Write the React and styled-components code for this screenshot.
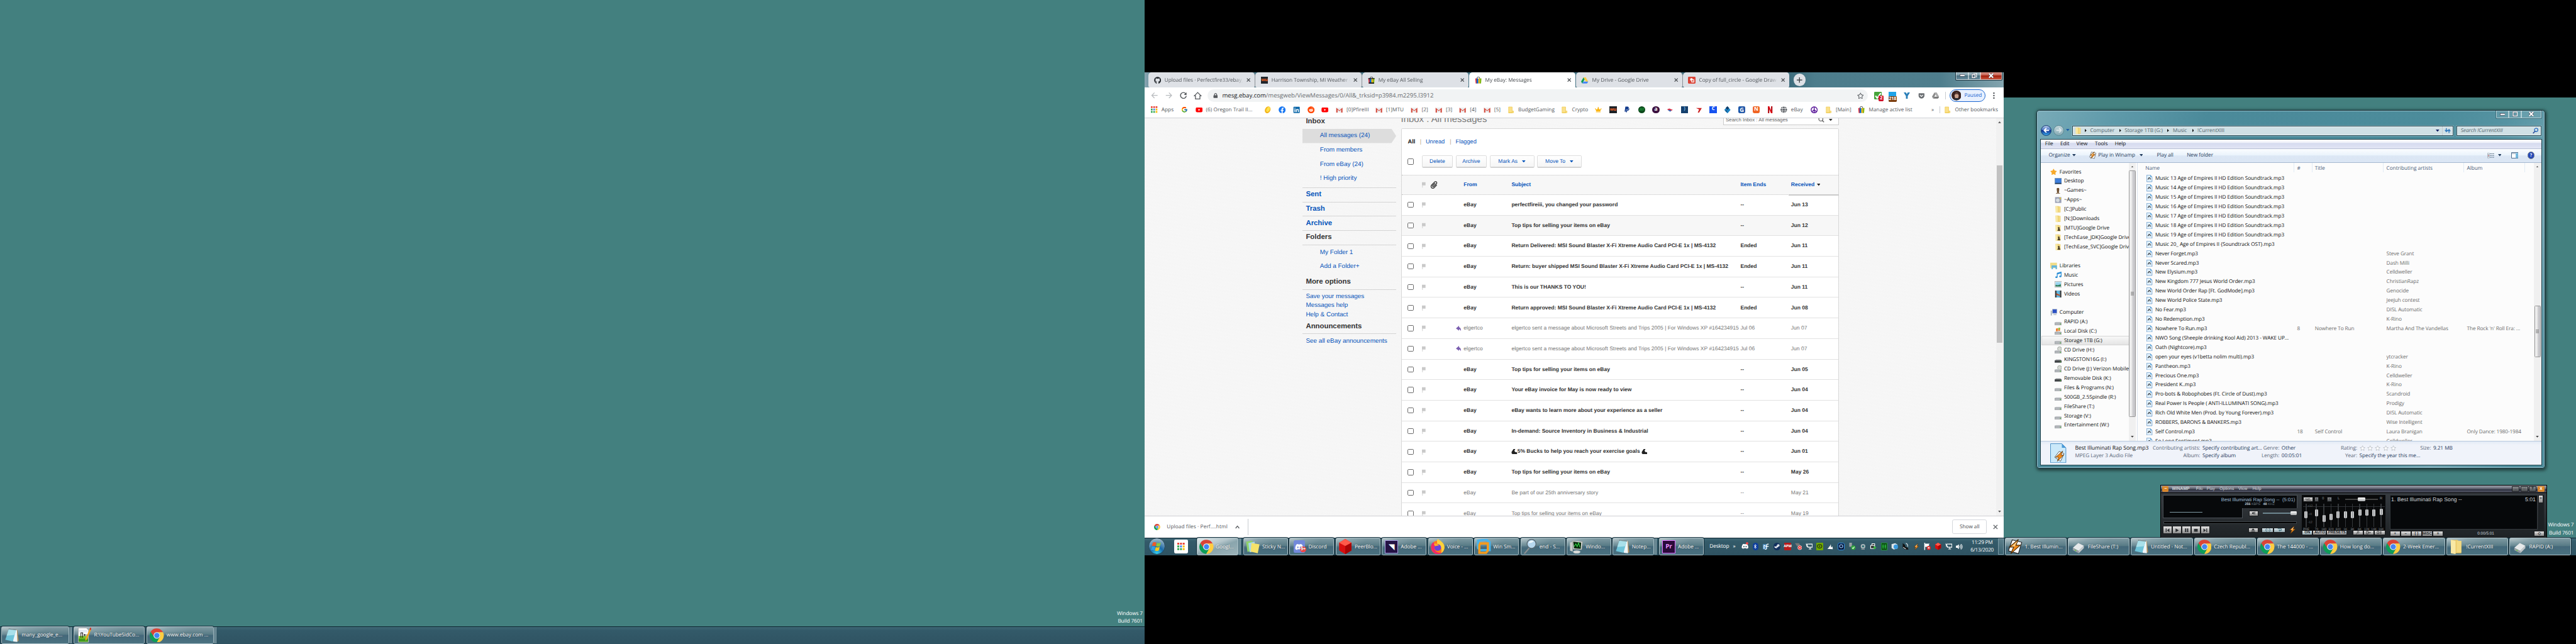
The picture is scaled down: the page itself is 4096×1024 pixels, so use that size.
import React from "react";
import styled, { createGlobalStyle, css } from "styled-components";
import {
  FaGithub, FaFacebook, FaLinkedin, FaReddit, FaYoutube, FaPaypal, FaBluetoothB,
  FaSteamSymbol, FaDiscord, FaPeace, FaCrown, FaStar, FaRegStar, FaLock, FaGetPocket,
  FaPaperclip, FaVolumeUp, FaChessPawn, FaMusic, FaGlobe,
} from "react-icons/fa";
import { FcGoogle } from "react-icons/fc";

const UI = `"Open Sans", "Noto Sans", sans-serif`;
const ARIAL = `"Liberation Sans", Arial, sans-serif`;

const Global = createGlobalStyle`
  html, body { margin: 0; background: #000; overflow: hidden; }
  * { box-sizing: border-box; }
  svg { display: block; flex: none; }
`;

/* ---------- Desktop ---------- */
const Board = styled.div`
  zoom: 0.711111;
  width: 5760px;
  height: 1440px;
  display: flex;
  align-items: flex-start;
  background: #000;
  overflow: hidden;
  font-family: ${UI};
  font-size: 11.6px;
  letter-spacing: -0.05px;
  line-height: 16px;
  white-space: nowrap;
  text-rendering: geometricPrecision;
`;
const Screen = styled.div`
  width: ${(p) => p.$w}px;
  height: ${(p) => p.$h}px;
  margin-top: ${(p) => p.$top}px;
  flex: none;
  display: flex;
  flex-direction: column;
  overflow: hidden;
  background: #43807f;
`;
const Desktop = styled.div`
  flex: 1;
  min-height: 0;
  position: relative;
  display: flex;
  flex-direction: column;
  justify-content: flex-end;
  align-items: flex-end;
`;
const Build = styled.div`
  color: #fff;
  text-align: right;
  line-height: 17.5px;
  padding: 0 5px 1px 0;
  letter-spacing: -0.15px;
`;

/* ---------- Taskbar ---------- */
const Bar = styled.div`
  height: 40px;
  flex: none;
  display: flex;
  align-items: stretch;
  padding-left: ${(p) => p.$pad || 0}px;
  background: linear-gradient(#0d2430 0 1px, #8fabb3 1px 2px, #3d6674 2px, #335a69 9px, #2f5362 100%);
`;
const Stack = styled.div`
  width: ${(p) => p.$w}px;
  flex: none;
  display: flex;
`;
const TaskBtn = styled.div`
  width: ${(p) => p.$w}px;
  height: 39px;
  margin-top: 1px;
  flex: none;
  display: flex;
  align-items: center;
  border: 1px solid #aec3ca;
  outline: 1px solid #14303c;
  outline-offset: 0;
  border-radius: 3px;
  color: #fff;
  overflow: hidden;
  background: ${(p) =>
    p.$active
      ? "linear-gradient(160deg, #dfe8ea 0%, #b5c6cb 38%, #8aa5ad 55%, #9db3b9 100%)"
      : "radial-gradient(ellipse 70% 60% at 0% 0%, #b6c5c9 0%, rgba(150,175,182,.55) 50%, rgba(120,150,160,0) 100%), linear-gradient(#7f9aa2 0%, #587b86 45%, #44687a 50%, #4b7280 100%)"};
  text-shadow: 0 0 2px rgba(0, 0, 0, 0.5);
`;
const Edge = styled.div`
  width: 3px;
  height: 37px;
  margin-top: 2px;
  border-right: 1px solid #9bb3bb;
  background: #3a5f6d;
`;
const TaskIcon = styled.span`
  width: ${(p) => p.$w}px;
  height: 34px;
  flex: none;
  display: flex;
  align-items: center;
  justify-content: center;
`;

function Task({ icon, text, slot, w, iw = 41, stack = 0, active }) {
  return (
    <Stack $w={slot}>
      <TaskBtn $w={w} $active={active}>
        <TaskIcon $w={iw}>{icon}</TaskIcon>
        {text}
      </TaskBtn>
      {Array.from({ length: stack }, (_, i) => <Edge key={i} />)}
    </Stack>
  );
}

/* ---------- Icons ---------- */
const Chrome = ({ s = 32 }) => (
  <svg width={s} height={s} viewBox="0 0 48 48">
    <path fill="#db4437" d="M3.2 12A24 24 0 0 1 44.8 13H24A11 11 0 0 0 14.5 29.5Z" />
    <path fill="#ffcd40" d="M44.8 13A24 24 0 0 1 23 48L33.5 29.5A11 11 0 0 0 24 13Z" />
    <path fill="#0f9d58" d="M3.2 12A24 24 0 0 0 23 48L33.5 29.5A11 11 0 0 1 14.5 29.5Z" />
    <circle cx="24" cy="24" r="11" fill="#f1f1f1" />
    <circle cx="24" cy="24" r="8.7" fill="#4285f4" />
  </svg>
);
const Notepad = () => (
  <svg width="34" height="34" viewBox="0 0 34 34">
    <path d="M11 4l18 1 3 25-4 1z" fill="#b08d5a" />
    <path d="M10 3l18 2 1 27-9-1z" fill="#eef5f8" />
    <path d="M10 3l16 2-7 26L2 27z" fill="#6fc3d8" />
    <path d="M10 3l16 2-3 11L5 18z" fill="#a9e0ea" />
    <path d="M10 3l17 2" stroke="#555" strokeWidth="2" strokeDasharray="1.5 1.5" />
  </svg>
);
const NotepadPP = () => (
  <svg width="32" height="36" viewBox="0 0 32 36">
    <path d="M2 2h18l5 5v27H2z" fill="#fff" stroke="#999" />
    <path d="M3 20h21v13H3z" fill="#7ac52c" />
    <path d="M3 26h21v7H3z" fill="#3f9a1c" />
    <path d="M3 8h19M3 11h20" stroke="#b8c8e0" />
    <path d="M8 24V13h4v11M14 18h5M16.500 15.500v5M20 18h4" stroke="#111" fill="none" strokeWidth="1.500" />
    <path d="M29 1l3 2-11 25-3 3V26z" fill="#f0a020" />
    <path d="M29 1l3 2-2 4-3-2z" fill="#c33" />
  </svg>
);
const Folder = ({ w = 16, h = 16, person }) => (
  <svg width={w} height={h} viewBox="0 0 16 16">
    <path d="M2 1h7l1 1h3v13H3z" fill="#e9c867" />
    <path d="M2 1l5 1v14l-5-1z" fill="#f9e9a5" />
    <path d="M8 2h5v12H8z" fill="#f3da83" />
    {person && <path d="M7 6h4v3l2 5H6l2-4z" fill="#4a4030" />}
  </svg>
);
const BmFolder = () => (
  <svg width="16" height="16" viewBox="0 0 16 16">
    <path d="M2.500 1.500h8v13h-8z" fill="#fbe08a" stroke="#edc94f" />
    <path d="M10.500 10.500h3v4h-11v0h8z" fill="#fbe08a" stroke="#edc94f" />
  </svg>
);
const Bag = ({ black }) => (
  <svg width="16" height="16" viewBox="0 0 16 16">
    <path d="M5 5V3a3 2.500 0 0 1 6 0v2" fill="none" stroke="#333" strokeWidth="1.200" />
    <path d="M1 4h4v11H2z" fill={black ? "#d5282e" : "#e53238"} />
    <path d="M4 4h4v11H4z" fill="#0064d2" />
    <path d="M8 4h3v11H8z" fill="#f5af02" />
    <path d="M11 4h4l-1 11h-3z" fill="#86b817" />
    {black && <path d="M1 3h14v2H1zM2 13h12v3H2z" fill="#111" />}
  </svg>
);
const Gmail = () => (
  <svg width="16" height="16" viewBox="0 0 16 16">
    <path d="M1 3h14v11H1z" fill="#eceff1" />
    <path d="M1 14V3l7 6 7-6v11h-3V7.500l-4 3.300-4-3.300V14z" fill="#d54b3d" />
  </svg>
);
const Drive = ({ gray }) => (
  <svg width="16" height="16" viewBox="0 0 16 16">
    <path d="M5.500 1.500L0 11l2.700 4 5.400-9.500z" fill={gray ? "#8a8a8a" : "#0f9d58"} />
    <path d="M5.500 1.500h5L16 11h-5.300z" fill={gray ? "#aaa" : "#ffcd40"} />
    <path d="M5.200 11H16l-2.700 4H2.700z" fill={gray ? "#777" : "#4285f4"} />
  </svg>
);
const Bolt = ({ s = 32, paper }) => (
  <svg width={s} height={s} viewBox="0 0 32 32">
    {paper && <path d="M10 2l20 5-7 24L2 25z" fill="#fff" stroke="#222" strokeWidth="1.500" />}
    <path d="M23 1L4 17h9L7 31l20-18h-9z" fill="#f08a1c" stroke="#4a2a05" strokeWidth="1.500" />
    <path d="M21 4L9 16h6z" fill="#ffd08a" />
  </svg>
);
const Gem = ({ s = 34 }) => (
  <svg width={s} height={s} viewBox="0 0 32 32">
    <path d="M16 0l13 8v16l-13 8L3 24V8z" fill="#d80f0f" />
    <path d="M16 0l13 8-13 7L3 8z" fill="#ff5a4a" />
    <path d="M16 15l13-7v16l-13 8z" fill="#a80505" />
  </svg>
);
const Sticky = () => (
  <svg width="34" height="34" viewBox="0 0 34 34">
    <path d="M2 6l14-2 3 22-14 3z" fill="#8fd36b" />
    <path d="M7 9l14-3 1 21-12 3z" fill="#a8d8e8" />
    <path d="M14 9l18 3-4 20-16-4z" fill="#f6e36a" />
  </svg>
);
const Firefox = () => (
  <svg width="34" height="34" viewBox="0 0 34 34">
    <circle cx="17" cy="19" r="15" fill="#ff7a1a" />
    <path d="M17 0c8 5 16 10 15 20-1 6-4 10-8 12 4-8 0-18-8-21 0 0-2-7 1-11z" fill="#ffd23a" />
    <path d="M3 12c-3 12 4 20 12 22 6 1 10-2 11-4-12 4-20-6-15-18l-4-5z" fill="#f0286a" />
    <circle cx="17" cy="19" r="7.500" fill="#6a44d8" />
    <path d="M8 11c4-2 9 0 12 4-4-1-6 1-9 1z" fill="#ffa82a" />
  </svg>
);
const VM = () => (
  <svg width="32" height="34" viewBox="0 0 32 34">
    <path d="M3 4l18-3 8 6v18H8L3 20z" fill="none" stroke="#49b3ea" strokeWidth="5" />
    <path d="M8 10h17v16l-4 5H6V14z" fill="none" stroke="#f39a1e" strokeWidth="5" />
  </svg>
);
const Lens = () => (
  <svg width="34" height="34" viewBox="0 0 34 34">
    <path d="M15 20L4 33" stroke="#8b8f92" strokeWidth="3" />
    <circle cx="20" cy="11" r="10" fill="#b7d8ee" stroke="#5a6b75" strokeWidth="2" />
    <path d="M13 9a8 8 0 0 1 12-4c-3 3-8 5-12 4z" fill="#eef8ff" />
  </svg>
);
const Monitor = () => (
  <svg width="34" height="34" viewBox="0 0 34 34">
    <path d="M2 8l6-2v22l-6-2z" fill="#c9cdc9" />
    <path d="M7 4l23 2-2 18-19-1z" fill="#dfe3df" stroke="#888" />
    <path d="M9 6l18 2-1 14-15-1z" fill="#06290c" />
    <path d="M11 17l4-6 3 6 3-8 3 9" fill="none" stroke="#37e04a" strokeWidth="1.500" />
    <ellipse cx="17" cy="29" rx="8" ry="3.500" fill="#d7dad7" />
  </svg>
);
const Drivebox = () => (
  <svg width="30" height="30" viewBox="0 0 34 34">
    <path d="M3 19L17 7l14 7-13 13z" fill="#e6e9ea" />
    <path d="M3 19l15 8v6L3 25z" fill="#9aa0a3" />
    <path d="M18 27l13-13v6L18 33z" fill="#c4c8ca" />
    <circle cx="10" cy="26" r="1.500" fill="#5fd13a" />
  </svg>
);
const Orb = () => (
  <svg width="38" height="38" viewBox="0 0 38 38">
    <defs>
      <radialGradient id="orb" cx=".5" cy=".95" r=".9">
        <stop offset="0" stopColor="#36d3f5" />
        <stop offset=".45" stopColor="#1b6aa8" />
        <stop offset="1" stopColor="#9db7c6" />
      </radialGradient>
    </defs>
    <circle cx="19" cy="19" r="18" fill="url(#orb)" stroke="#1d3b4c" />
    <path d="M10 11c3-2 5-1 8 0l-2 8c-3-1-5-2-8 0z" fill="#ef5a28" />
    <path d="M19 11.500c3 1 6 1 9-1l-2 8c-3 2-6 2-9 1z" fill="#8cc63f" />
    <path d="M7.500 20.500c3-2 5-1 8 0l-2 8c-3-1-5-2-8 0z" fill="#2f9fe8" />
    <path d="M16.500 21c3 1 6 1 9-1l-2 8c-3 2-6 2-9 1z" fill="#fbc81a" />
  </svg>
);
const AppGrid = ({ s = 14 }) => (
  <svg width={s} height={s} viewBox="0 0 14 14">
    {["#ea4335", "#ea4335", "#ea4335", "#34a853", "#4285f4", "#fbbc05", "#34a853", "#34a853", "#fbbc05"].map((c, i) => (
      <rect key={i} x={(i % 3) * 5} y={Math.floor(i / 3) * 5} width="3.500" height="3.500" fill={c} />
    ))}
  </svg>
);
const Tri = ({ w = 8, h = 5, c = "#222", up }) => (
  <svg width={w} height={h} viewBox="0 0 8 5"><path d={up ? "M0 5L4 0l4 5z" : "M0 0h8L4 5z"} fill={c} /></svg>
);
const RightTri = () => (
  <svg width="4" height="7" viewBox="0 0 4 7"><path d="M0 0l4 3.500L0 7z" fill="#111" /></svg>
);
const Tile = styled.span`
  width: ${(p) => p.$s || 16}px;
  height: ${(p) => p.$h || p.$s || 16}px;
  flex: none;
  display: flex;
  align-items: center;
  justify-content: center;
  background: ${(p) => p.$bg || "transparent"};
  color: ${(p) => p.$c || "#fff"};
  border: ${(p) => (p.$bd ? `2px solid ${p.$bd}` : "none")};
  border-radius: ${(p) => p.$r || 0}px;
  font: bold ${(p) => p.$f || 11}px/1 ${UI};
  letter-spacing: -0.3px;
`;
const Badged = styled.span`
  position: relative;
  display: flex;
`;
const Badge = styled.span`
  position: absolute;
  left: ${(p) => p.$x}px;
  top: ${(p) => p.$y}px;
  min-width: 11px;
  padding: 0 1px;
  text-align: center;
  background: ${(p) => p.$bg};
  color: #fff;
  border-radius: ${(p) => p.$r || 2}px;
  font: bold 10px/12px ${UI};
`;
const Dot = styled.span`
  position: absolute;
  left: 10px;
  top: -2px;
  width: 6px;
  height: 6px;
  border-radius: 3px;
  background: #f04747;
`;

/* ---------- Browser ---------- */
const Browser = styled.div`
  align-self: stretch;
  flex: 1;
  min-height: 0;
  display: flex;
  flex-direction: column;
  background: #fff;
`;
const TabStrip = styled.div`
  height: 34px;
  flex: none;
  display: flex;
  padding-left: 8px;
  background: linear-gradient(to right, #8aa6b2 0, #4d7b8b 30px, #3f6d7d 1440px, #4d7d8c 1500px, #4f7e8d 1780px, #83a4ae 1920px);
`;
const Tab = styled.div`
  width: 239px;
  flex: none;
  display: flex;
  align-items: center;
  padding: 0 9px 0 12px;
  gap: 8px;
  border-radius: 7px 7px ${(p) => (p.$on ? "0 0" : "3px 3px")};
  border-right: ${(p) => (p.$sep ? "1px solid #8b9095" : "1px solid transparent")};
  background: ${(p) => (p.$on ? "#fff" : "#dee1e6")};
  background-clip: padding-box;
  color: ${(p) => (p.$on ? "#45494d" : "#54585d")};
`;
const TabTitle = styled.span`
  flex: 1;
  min-width: 0;
  overflow: hidden;
  letter-spacing: 0;
  mask-image: linear-gradient(to right, #000 90%, transparent);
`;
const Cross = ({ s = 9, c = "#45494d" }) => (
  <svg width={s} height={s} viewBox="0 0 10 10"><path d="M1 1l8 8M9 1L1 9" stroke={c} strokeWidth="1.800" /></svg>
);
const NewTab = styled.div`
  width: 28px;
  height: 28px;
  margin: 3px 0 0 8px;
  border-radius: 14px;
  background: #dee1e6;
  display: flex;
  align-items: center;
  justify-content: center;
`;
const Controls = styled.div`
  margin-left: auto;
  margin-right: 3px;
  height: 18px;
  display: flex;
  border: 1px solid #1e3540;
  border-top: 0;
  border-radius: 0 0 4px 4px;
  overflow: hidden;
`;
const Control = styled.div`
  width: ${(p) => p.$w}px;
  display: flex;
  align-items: center;
  justify-content: center;
  border: 1px solid rgba(255, 255, 255, 0.5);
  border-top: 0;
  background: ${(p) =>
    p.$clear ? "rgba(255,255,255,.08)" : p.$red ? "linear-gradient(#d79488, #c4594a 48%, #a5200c 50%, #c4503a)" : "linear-gradient(#a5bcc5, #7898a5 48%, #4a7080 50%, #64899a)"};
`;
const MinGlyph = () => <svg width="12" height="6" viewBox="0 0 12 6"><rect x=".5" y=".5" width="11" height="4" fill="#fff" stroke="#445" /></svg>;
const MaxGlyph = ({ restore }) => (
  <svg width="12" height="12" viewBox="0 0 12 12">
    {restore && <path d="M4 1h7v8h-2" fill="none" stroke="#fff" strokeWidth="1.500" />}
    <rect x="1.500" y={restore ? 3.500 : 1.500} width={restore ? 6 : 9} height={restore ? 7 : 9} fill="none" stroke="#445" strokeWidth="3" />
    <rect x="1.500" y={restore ? 3.500 : 1.500} width={restore ? 6 : 9} height={restore ? 7 : 9} fill="none" stroke="#fff" strokeWidth="1.800" />
  </svg>
);
const XGlyph = () => (
  <svg width="14" height="12" viewBox="0 0 14 12">
    <path d="M2.500 1.500l9 9M11.500 1.500l-9 9" stroke="#445" strokeWidth="4.500" />
    <path d="M2.500 1.500l9 9M11.500 1.500l-9 9" stroke="#fff" strokeWidth="2.800" />
  </svg>
);
const Toolbar = styled.div`
  height: 36px;
  flex: none;
  display: flex;
  align-items: center;
  padding: 0 0 0 6px;
`;
const Slot = styled.span`
  width: ${(p) => p.$w || 32}px;
  flex: none;
  display: flex;
  align-items: center;
  justify-content: center;
`;
const Omni = styled.div`
  width: 1477px;
  height: 28px;
  margin-left: 6px;
  border-radius: 14px;
  background: #f1f3f4;
  display: flex;
  align-items: center;
  padding: 0 10px 0 12px;
  font-size: 13.5px;
  letter-spacing: -0.02px;
  color: #6a6e72;
`;
const Host = styled.span`color: #202124; margin-left: 10px;`;
const Spring = styled.span`flex: 1;`;
const Paused = styled.div`
  width: 81px;
  height: 28px;
  margin-left: 8px;
  border: 1px solid #1a66d0;
  border-radius: 14px;
  background: #e8f0fe;
  color: #1967d2;
  display: flex;
  align-items: center;
  gap: 7px;
  padding-left: 3px;
`;
const Avatar = () => (
  <svg width="22" height="22" viewBox="0 0 22 22">
    <circle cx="11" cy="11" r="11" fill="#3a2320" />
    <ellipse cx="11.500" cy="11.500" rx="4.500" ry="6.500" fill="#c9a08c" />
    <path d="M6 10c1-6 10-6 11 0-3-3-8-3-11 0z" fill="#43241f" />
    <path d="M4 19c4-3 11-3 14 0a11 11 0 0 1-14 0z" fill="#27303c" />
  </svg>
);
const VRule = styled.span`
  width: 1px;
  height: ${(p) => p.$h}px;
  flex: none;
  background: #c8cbd0;
`;
const Bookmarks = styled.div`
  height: 33px;
  flex: none;
  display: flex;
  align-items: center;
  padding: 0 0 5px 14px;
  border-bottom: 1px solid #cfd2d6;
  color: #54585c;
`;
const Bookmark = styled.span`
  width: ${(p) => p.$w}px;
  flex: none;
  display: flex;
  align-items: center;
  gap: 8px;
  letter-spacing: 0.08px;
`;
const Coin = () => <svg width="16" height="16" viewBox="0 0 16 16"><ellipse cx="8" cy="8" rx="6" ry="8" transform="rotate(25 8 8)" fill="#f3b41b" /><ellipse cx="9" cy="7" rx="3.500" ry="6" transform="rotate(25 9 7)" fill="#ffe14a" /></svg>;
const Check = () => <svg width="18" height="18" viewBox="0 0 18 18"><rect width="17" height="17" rx="2" fill="#46a33a" /><path d="M3 9l4 5L15 3" fill="none" stroke="#fff" strokeWidth="3" /></svg>;
const Wing = ({ c = "#c22" }) => <svg width="16" height="16" viewBox="0 0 16 16"><path d="M1 4h13l-6 10H5l3-7z" fill={c} /></svg>;

const bookmarks = [
  [67, <AppGrid key="i" s={15} />, "Apps"], [31.6, <FcGoogle key="i" size={15} />], [154.4, <FaYoutube key="i" size={16} color="#f00" />, "(6) Oregon Trail II..."],
  [32, <Coin key="i" />], [32, <FaFacebook key="i" size={16} color="#1877f2" />], [32, <FaLinkedin key="i" size={16} color="#0a66a8" />],
  [32, <FaReddit key="i" size={16} color="#ff4500" />], [32, <FaYoutube key="i" size={16} color="#f00" />],
  [88, <Gmail key="i" />, "[0]PfireIII"], [80, <Gmail key="i" />, "[1]MTU"], [54, <Gmail key="i" />, "[2]"], [54, <Gmail key="i" />, "[3]"], [54, <Gmail key="i" />, "[4]"], [54, <Gmail key="i" />, "[5]"],
  [120, <BmFolder key="i" />, "BudgetGaming"], [76, <BmFolder key="i" />, "Crypto"],
  [32, <FaCrown key="i" size={15} color="#fbb615" />], [32, <Tile key="i" $bg="#1c2126" $c="#f0672b" $f={10}>wu</Tile>], [32, <FaPaypal key="i" size={14} color="#123a8c" />],
  [32, <Tile key="i" $bg="#0d4a1c" $c="#27b04a" $r={8} $f={9}>///</Tile>], [32, <Tile key="i" $bg="#3c1240" $r={8} $f={12}>a</Tile>],
  [32, <svg key="i" width="16" height="16" viewBox="0 0 16 16"><path d="M1 7l5-2 8 3-6 3z" fill="#d8344a" /><path d="M3 9l5 3 3-2-5-2z" fill="#2f63b8" /></svg>],
  [32, <Tile key="i" $bg="#15406d" $c="#7cb8e8">)</Tile>], [32, <Wing key="i" />], [32, <Tile key="i" $bg="#1652f0">C</Tile>],
  [32, <svg key="i" width="16" height="16" viewBox="0 0 16 16"><path d="M8 0l7 8-7 8-7-8z" fill="#1c83c4" /><path d="M8 0l4 4-4 4-4-4zM4 8l4 4-4 0z" fill="#123d68" /></svg>],
  [32, <Tile key="i" $bg="#1f57a8" $r={3} $f={13}>G</Tile>], [32, <Tile key="i" $bg="#f06423" $r={3} $f={12}>N</Tile>],
  [31, <svg key="i" width="16" height="16" viewBox="0 0 16 16"><path d="M3 0h3v16H3zM10 0h3v16h-3z" fill="#b1060f" /><path d="M3 0h3l7 16h-3z" fill="#e50914" /></svg>],
  [67, <FaGlobe key="i" size={15} color="#5f6368" />, "eBay"], [32, <FaPeace key="i" size={16} color="#5b1a9a" />], [74, <BmFolder key="i" />, "[Main]"], [160, <Bag key="i" />, "Manage active list"],
];

/* ---------- eBay page ---------- */
const Page = styled.div`
  flex: 1;
  min-height: 0;
  display: flex;
  overflow: hidden;
  background: repeating-linear-gradient(60deg, #f7f7f7 0 2px, #f4f4f4 2px 3px);
  font-family: ${ARIAL};
  letter-spacing: 0;
  color: #333;
`;
const Nav = styled.div`
  width: 210px;
  margin-left: 352px;
  flex: none;
  font-size: 14px;
`;
const NavHead = styled.div`
  height: ${(p) => p.$h || 32}px;
  padding: ${(p) => p.$pt || 0}px 0 ${(p) => p.$pb || 0}px 8px;
  display: flex;
  align-items: center;
  font-weight: bold;
  font-size: 16px;
  color: ${(p) => (p.$link ? "#0654ba" : "#333")};
  border-bottom: ${(p) => (p.$line ? "1px solid #d5d5d5" : "none")};
`;
const NavItem = styled.div`
  height: ${(p) => p.$h || 32}px;
  padding-left: ${(p) => (p.$flat ? 8 : 39.500)}px;
  display: flex;
  align-items: center;
  color: #0654ba;
  ${(p) => p.$on && css`background: #ddd; clip-path: polygon(0 0, 95% 0, 100% 50%, 95% 100%, 0 100%);`}
`;
const NavGroup = styled.div`
  padding-bottom: ${(p) => p.$pb || 0}px;
  border-bottom: ${(p) => (p.$line ? "1px solid #d5d5d5" : "none")};
`;
const Main = styled.div`
  width: 979px;
  margin-left: 10.500px;
  flex: none;
  display: flex;
  flex-direction: column;
`;
const Heading = styled.div`
  height: 22.500px;
  flex: none;
  display: flex;
  justify-content: space-between;
  font-size: 21px;
  color: #777;
  line-height: 5px;
`;
const SearchBox = styled.div`
  width: 258px;
  height: 15px;
  padding: 0 12px 8px 4px;
  display: flex;
  align-items: center;
  background: #fff;
  border: 1px solid #ccc;
  border-top: 0;
  font-size: 11px;
  color: #666;
`;
const Panel = styled.div`
  flex: 1;
  background: #fff;
  border: 1px solid #d8d8d8;
  border-bottom: 0;
  border-radius: 3px 3px 0 0;
`;
const Filters = styled.div`
  height: 58px;
  padding-left: 14px;
  display: flex;
  align-items: center;
  font-size: 13px;
  color: #0654ba;
`;
const FilterText = styled.span`
  width: ${(p) => p.$w}px;
  color: ${(p) => p.$c || "#0654ba"};
  font-weight: ${(p) => (p.$b ? "bold" : "normal")};
`;
const Actions = styled.div`
  height: 44px;
  padding-left: 14px;
  display: flex;
  align-items: flex-start;
  font-size: 12px;
`;
const CheckBox = styled.span`
  width: 13px;
  height: 13px;
  flex: none;
  border: 1px solid #6b6b6b;
  border-radius: 2.500px;
  background: #fff;
  margin-top: ${(p) => p.$mt || 0}px;
`;
const ActionBtn = styled.span`
  width: ${(p) => p.$w}px;
  height: 29px;
  margin-left: ${(p) => p.$ml}px;
  display: flex;
  align-items: center;
  justify-content: center;
  gap: 10px;
  border: 1px solid #ddd;
  border-bottom: 3px solid #d3d3d3;
  border-radius: 3px;
  background: linear-gradient(#fff, #f5f5f5);
  color: #0654ba;
`;
const Row = styled.div`
  height: ${(p) => (p.$head ? 45 : 46)}px;
  padding-left: 14px;
  display: grid;
  grid-template-columns: 31px 19px 57px 18px 107px 508px 4px 113px 107px;
  align-items: center;
  font-size: 12px;
  font-weight: ${(p) => (p.$read ? "normal" : "bold")};
  color: ${(p) => (p.$head ? "#0654ba" : p.$read ? "#777" : "#333")};
  background: ${(p) => (p.$shade ? "#f7f7f7" : "#fff")};
  border-bottom: ${(p) => (p.$head ? "1px dotted #c4c4c4" : "1px solid #e2e2e2")};
  border-top: ${(p) => (p.$head ? "1px dotted #c4c4c4" : "none")};
`;
const Subject = styled.span`overflow: hidden;`;
const Sorted = styled.span`
  align-self: stretch;
  margin-left: -5px;
  margin-bottom: -3px;
  padding: 0 0 0 5px;
  display: flex;
  align-items: center;
  gap: 5px;
  border-bottom: 4px solid #cacaca;
  position: relative;
`;
const Flag = () => (
  <svg width="9" height="13" viewBox="0 0 9 13"><path d="M0 1h8v7H1v5H0z" fill="#c9c9c9" /><path d="M0 8h2v5H0z" fill="#ddd" /></svg>
);
const Replied = () => (
  <svg width="12" height="12" viewBox="0 0 12 12"><path d="M0 6l7-6v3c3 1 5 4 4 9-1-3-2-4-4-4v3z" fill="#7b5fb0" /></svg>
);
const MailRow = ({ from = "eBay", subject, ends = "--", date, read, shade, replied }) => (
  <Row $read={read} $shade={shade}>
    <CheckBox />
    <Flag />
    <span />
    <span>{replied && <Replied />}</span>
    <span>{from}</span>
    <Subject>{subject}</Subject>
    <span />
    <span>{ends}</span>
    <span>{date}</span>
  </Row>
);
const InlineRow = styled.span`display: flex; align-items: center; white-space: pre;`;
function Arm() {
  return <svg width="13" height="12" viewBox="0 0 13 12"><path d="M5 0h4l-2 4 2 3c2-1 4 0 4 2v3H4C1 11 0 8 1 6z" fill="#222" /></svg>;
}
const tips = "Top tips for selling your items on eBay";
const trips = "elgertco sent a message about Microsoft Streets and Trips 2005 | For Windows XP #164234915";
const mail = [
  { subject: "perfectfireiii, you changed your password", date: "Jun 13" },
  { subject: tips, date: "Jun 12", shade: true },
  { subject: "Return Delivered: MSI Sound Blaster X-Fi Xtreme Audio Card PCI-E 1x | MS-4132", ends: "Ended", date: "Jun 11" },
  { subject: "Return: buyer shipped MSI Sound Blaster X-Fi Xtreme Audio Card PCI-E 1x | MS-4132", ends: "Ended", date: "Jun 11" },
  { subject: "This is our THANKS TO YOU!", date: "Jun 11" },
  { subject: "Return approved: MSI Sound Blaster X-Fi Xtreme Audio Card PCI-E 1x | MS-4132", ends: "Ended", date: "Jun 08" },
  { from: "elgertco", subject: trips, ends: "Jul 06", date: "Jun 07", read: true, replied: true },
  { from: "elgertco", subject: trips, ends: "Jul 06", date: "Jun 07", read: true, replied: true },
  { subject: tips, date: "Jun 05" },
  { subject: "Your eBay invoice for May is now ready to view", date: "Jun 04" },
  { subject: "eBay wants to learn more about your experience as a seller", date: "Jun 04" },
  { subject: "In-demand: Source Inventory in Business & Industrial", date: "Jun 04" },
  { subject: <InlineRow><Arm />5% Bucks to help you reach your exercise goals <Arm /></InlineRow>, date: "Jun 01" },
  { subject: tips, date: "May 26" },
  { subject: "Be part of our 25th anniversary story", date: "May 21", read: true },
  { subject: tips, date: "May 19", read: true },
];
const Scroll = styled.div`
  width: 17px;
  margin-left: auto;
  flex: none;
  background: #f1f1f1;
  display: flex;
  flex-direction: column;
  align-items: center;
  padding: 7px 0 7px;
`;
const Thumb = styled.span`
  width: 13px;
  height: 396px;
  margin: 94px 0 auto;
  background: #c1c1c1;
`;
const Shelf = styled.div`
  height: 49px;
  flex: none;
  display: flex;
  align-items: center;
  border-top: 1px solid #cfcfd3;
  background: #fff;
  color: #54585c;
  padding: 0 13px 0 21px;
`;
const ShelfName = styled.span`
  width: 153px;
  letter-spacing: 0.15px;
`;
const ShowAll = styled.span`
  width: 78px;
  height: 32px;
  margin-right: 13px;
  display: flex;
  align-items: center;
  justify-content: center;
  border: 1px solid #d5d8dc;
  border-radius: 4px;
  color: #4a4d50;
`;
const Gap = styled.span`width: ${(p) => p.$w}px; flex: none;`;

function BrowserWindow() {
  return (
    <Browser>
      <TabStrip>
        <Tab $sep><FaGithub size={16} color="#24292e" /><TabTitle>Upload files · Perfectfire33/ebay_</TabTitle><Cross /></Tab>
        <Tab $sep><Tile $bg="#20262c" $c="#f26322" $f={10}>wu</Tile><TabTitle>Harrison Township, MI Weather C</TabTitle><Cross /></Tab>
        <Tab><Bag black /><TabTitle>My eBay All Selling</TabTitle><Cross /></Tab>
        <Tab $on><Bag /><TabTitle>My eBay: Messages</TabTitle><Cross /></Tab>
        <Tab $sep><Drive /><TabTitle>My Drive - Google Drive</TabTitle><Cross /></Tab>
        <Tab><Tile $bg="#db4437" $r={2}><svg width="10" height="10" viewBox="0 0 10 10"><circle cx="3.500" cy="3.500" r="3" fill="#fff" /><path d="M4 4h5v5H4z" fill="#db4437" stroke="#fff" strokeWidth="1.500" /></svg></Tile><TabTitle>Copy of full_circle - Google Draw</TabTitle><Cross /></Tab>
        <NewTab><svg width="12" height="12" viewBox="0 0 12 12"><path d="M6 0v12M0 6h12" stroke="#45494d" strokeWidth="2" /></svg></NewTab>
        <Controls>
          <Control $w={28}><MinGlyph /></Control>
          <Control $w={27}><MaxGlyph restore /></Control>
          <Control $w={47} $red><XGlyph /></Control>
        </Controls>
      </TabStrip>
      <Toolbar>
        <Slot><svg width="16" height="16" viewBox="0 0 16 16"><path d="M15 8H2M8 2L2 8l6 6" fill="none" stroke="#b9bcbf" strokeWidth="1.800" /></svg></Slot>
        <Slot><svg width="16" height="16" viewBox="0 0 16 16"><path d="M1 8h13M8 2l6 6-6 6" fill="none" stroke="#b9bcbf" strokeWidth="1.800" /></svg></Slot>
        <Slot><svg width="16" height="16" viewBox="0 0 16 16"><path d="M13.500 4.500A6.500 6.500 0 1 0 14.500 9" fill="none" stroke="#54585c" strokeWidth="2" /><path d="M15 1v6H9z" fill="#54585c" /></svg></Slot>
        <Slot><svg width="18" height="17" viewBox="0 0 18 17"><path d="M1.500 9L9 1.500 16.500 9H14v7H4V9z" fill="none" stroke="#54585c" strokeWidth="1.800" /></svg></Slot>
        <Omni>
          <FaLock size={11} color="#54585c" />
          <Host>mesg.ebay.com</Host>/mesgweb/ViewMessages/0/All&amp;_trksid=p3984.m2295.l3912
          <Spring />
          <FaRegStar size={15} color="#54585c" />
        </Omni>
        <Gap $w={7} />
        <Slot><Badged><Check /><Badge $bg="#d0122c" $x={10} $y={9}>2</Badge></Badged></Slot>
        <Slot><Badged><Tile $bg="#1ea3e8" $s={17} /><Badge $bg="#7a3b0b" $x={-1} $y={10}>218</Badge></Badged></Slot>
        <Slot><svg width="14" height="14" viewBox="0 0 14 14"><path d="M0 0h5l2 4 2-4h5L9 8v6H5V8z" fill="#2a7fb8" /></svg></Slot>
        <Slot><FaGetPocket size={15} color="#6b6f73" /></Slot>
        <Slot><Drive gray /></Slot>
        <Gap $w={6} /><VRule $h={16} />
        <Paused><Avatar />Paused</Paused>
        <Gap $w={17} />
        <svg width="4" height="14" viewBox="0 0 4 14"><path d="M.5 0h3v3h-3zM.5 5.500h3v3h-3zM.5 11h3v3h-3z" fill="#54585c" /></svg>
      </Toolbar>
      <Bookmarks>
        {bookmarks.map(([w, icon, text], i) => <Bookmark key={i} $w={w}>{icon}{text}</Bookmark>)}
        <Gap $w={4} />»<Gap $w={12} /><VRule $h={16} /><Gap $w={10} /><Bookmark $w={120}><BmFolder />Other bookmarks</Bookmark>
      </Bookmarks>
      <Page>
        <Nav>
          <NavHead $h={23} $pb={7}>Inbox</NavHead>
          <NavGroup $line $pb={4}>
            <NavItem $on>All messages (24)</NavItem>
            <NavItem>From members</NavItem>
            <NavItem>From eBay (24)</NavItem>
            <NavItem $h={31}>! High priority</NavItem>
          </NavGroup>
          <NavHead $link $line>Sent</NavHead>
          <NavHead $link $line>Trash</NavHead>
          <NavHead $link $line>Archive</NavHead>
          <NavHead $line>Folders</NavHead>
          <NavItem>My Folder 1</NavItem>
          <NavItem>Add a Folder+</NavItem>
          <NavHead $line $h={36} $pt={4}>More options</NavHead>
          <NavItem $flat $h={29}>Save your messages</NavItem>
          <NavItem $flat $h={12}>Messages help</NavItem>
          <NavItem $flat $h={30}>Help &amp; Contact</NavItem>
          <NavHead $line $h={28} $pb={3}>Announcements</NavHead>
          <NavItem $flat $h={31}>See all eBay announcements</NavItem>
        </Nav>
        <Main>
          <Heading>
            <span>Inbox : All messages</span>
            <SearchBox>Search Inbox : All messages<Spring /><svg width="14" height="14" viewBox="0 0 14 14"><circle cx="6" cy="6" r="4.500" fill="none" stroke="#666" strokeWidth="1.800" /><path d="M9 9l4 4" stroke="#666" strokeWidth="2" /></svg><Gap $w={10} /><Tri c="#333" /></SearchBox>
          </Heading>
          <Panel>
            <Filters>
              <FilterText $w={27} $b $c="#111">All</FilterText><FilterText $w={13} $c="#b9a58a">|</FilterText><FilterText $w={54}>Unread</FilterText><FilterText $w={13} $c="#b9a58a">|</FilterText><FilterText>Flagged</FilterText>
            </Filters>
            <Actions>
              <CheckBox $mt={8} />
              <ActionBtn $w={70} $ml={18}>Delete</ActionBtn>
              <ActionBtn $w={70} $ml={6}>Archive</ActionBtn>
              <ActionBtn $w={100} $ml={6}>Mark As<Tri c="#0654ba" /></ActionBtn>
              <ActionBtn $w={100} $ml={6}>Move To<Tri c="#0654ba" /></ActionBtn>
            </Actions>
            <Row $head $shade>
              <span /><Flag /><FaPaperclip size={17} color="#444" /><span /><span>From</span><span>Subject</span><span /><span>Item Ends</span><Sorted>Received<Tri c="#222" /></Sorted>
            </Row>
            {mail.map((m, i) => <MailRow key={i} {...m} />)}
          </Panel>
        </Main>
        <Scroll><Tri up c="#505050" w={7} h={4} /><Thumb /><Tri c="#505050" w={7} h={4} /></Scroll>
      </Page>
      <Shelf>
        <Chrome s={14} /><Gap $w={14} /><ShelfName>Upload files · Perf....html</ShelfName>
        <svg width="10" height="8" viewBox="0 0 10 8"><path d="M1 7l4-5 4 5" fill="none" stroke="#54585c" strokeWidth="1.800" /></svg>
        <Gap $w={18} /><VRule $h={36} /><Spring />
        <ShowAll>Show all</ShowAll><Cross s={11} c="#6b6f73" />
      </Shelf>
    </Browser>
  );
}

/* ---------- Tray ---------- */
const Tray = styled.div`
  display: flex;
  align-items: center;
  color: #fff;
`;
const Clock = styled.span`
  width: 72px;
  text-align: center;
  line-height: 17.500px;
  letter-spacing: -0.35px;
`;
const Peek = styled.span`
  width: 13px;
  height: 37px;
  margin: 2px 0 0 auto;
  border: 1px solid #7c9aa5;
  background: linear-gradient(#5c7f8b, #3a6270);
`;
const Glyph = ({ d, c = "#fff", s = 15 }) => <svg width={s} height={s} viewBox="0 0 16 16"><path d={d} fill={c} /></svg>;
const PCGlyph = () => <svg width="16" height="16" viewBox="0 0 16 16"><path d="M6 3h9v7H5V7M7 14h6M10 10v4" fill="none" stroke="#fff" strokeWidth="1.500" /><path d="M1 1h1v2h2V1h1v4L4 6v3H2V6L1 5z" fill="#fff" /></svg>;
const trayIcons = [
  <Badged key="i"><FaDiscord size={16} color="#fff" /><Dot /></Badged>,
  <Tile key="i" $bg="#0f3f9c" $s={12} $h={16} $r={6}><FaBluetoothB size={11} /></Tile>,
  <svg key="i" width="15" height="15" viewBox="0 0 16 16"><path d="M0 2h10v12H0z" fill="#4f92c8" /><path d="M14 2c-4-1-5 1-5 3v6c0 2-1 4-4 3M6 7h8M6 5H3v8" fill="none" stroke="#fff" strokeWidth="1.800" /></svg>,
  <Tile key="i" $bg="#12305e" $r={8}><FaSteamSymbol size={13} /></Tile>,
  <Tile key="i" $bg="#b71c1c" $f={8} $s={16}>APM</Tile>,
  <svg key="i" width="16" height="16" viewBox="0 0 16 16"><path d="M0 1l9 0 3 4-7 3z" fill="#777" /><circle cx="11" cy="11" r="4.500" fill="#e33" stroke="#fff" /><path d="M9.500 9.500l3 3M12.500 9.500l-3 3" stroke="#fff" strokeWidth="1.300" /></svg>,
  <PCGlyph key="i" />,
  <Tile key="i" $bg="#6fa800" $r={1}><svg width="12" height="10" viewBox="0 0 12 10"><ellipse cx="6" cy="5" rx="5" ry="4" fill="none" stroke="#1c2a10" strokeWidth="1.600" /><circle cx="6" cy="5" r="1.500" fill="#1c2a10" /></svg></Tile>,
  <Glyph key="i" d="M1 13l5-5-2-2 3 1 2-5 1 8 3-3 1 7z" />,
  <Tile key="i" $bg="#0b1a3a" $bd="#2d8be0" $r={4}><svg width="10" height="10"><circle cx="5" cy="5" r="3.500" fill="none" stroke="#9cf" strokeWidth="1.500" /></svg></Tile>,
  <svg key="i" width="16" height="16" viewBox="0 0 16 16"><path d="M2 0h6v9H2z" fill="#9a9fa2" /><circle cx="11" cy="11" r="5" fill="#2fa53a" /><path d="M8.500 11l2 2 3-4" stroke="#fff" fill="none" strokeWidth="1.500" /></svg>,
  <svg key="i" width="15" height="15" viewBox="0 0 16 16"><circle cx="8" cy="7" r="5.500" fill="#a8b4b8" /><circle cx="8" cy="7" r="2.500" fill="#2b6e74" /><path d="M4 13h8v2H4z" fill="#8a9498" /></svg>,
  <svg key="i" width="16" height="16" viewBox="0 0 16 16"><path d="M2 6h9v7H2zM5 6V2h6v4" fill="#333" stroke="#fff" strokeWidth="1.500" /><path d="M9 7l6 4-6 4z" fill="#35c13c" /></svg>,
  <Tile key="i" $bg="#0b3b12" $bd="#1f9a30" $s={13} $h={16}><Glyph s={9} c="#2fe04a" d="M0 0h6v4H0zM9 0h6v4H9zM0 6h6v4H0zM9 6h6v4H9zM0 12h6v4H0zM9 12h6v4H9z" /></Tile>,
  <svg key="i" width="16" height="16" viewBox="0 0 16 16"><path d="M1 3l8-2 5 3v9l-8 2-5-3z" fill="#dfe6ea" /><circle cx="10.500" cy="9" r="5" fill="#3b9be0" /></svg>,
  <svg key="i" width="16" height="16" viewBox="0 0 16 16"><path d="M2 1l5 4 1 4 5 2 2 4H7l-5-4z" fill="#111" /><path d="M9 1a7 7 0 0 1 4 8M3 10l6 4" fill="none" stroke="#e5e8ea" strokeWidth="1.500" /></svg>,
  <Bolt key="i" s={15} />,
  <svg key="i" width="16" height="16" viewBox="0 0 16 16"><path d="M1 0h2v16H1zM3 2h10l-2 3 2 4H3z" fill="#fff" /><circle cx="11" cy="11.500" r="4.500" fill="#d22" /><path d="M9 9.500l4 4M13 9.500l-4 4" stroke="#fff" strokeWidth="1.500" /></svg>,
  <Gem key="i" s={16} />,
  <PCGlyph key="i" />,
  <FaVolumeUp key="i" size={15} color="#fff" />,
];

/* ---------- Explorer ---------- */
const Explorer = styled.div`
  position: absolute;
  left: 74px;
  top: 28px;
  width: 1137px;
  height: 802px;
  border: 1px solid #16323a;
  border-radius: 6px;
  padding: 0 6px 6px;
  display: flex;
  flex-direction: column;
  box-shadow: inset 0 0 0 1px #a9cdd6, 1px 2px 7px 1px rgba(0, 0, 0, 0.55);
  background: linear-gradient(115deg, #79abb8 0, #5f9aaa 160px, #4b8a9a 350px, #4c8c9b 820px, #5593a2 960px, #74a7b4 1130px, #4f8f9e 1300px);
`;
const WinControls = styled(Controls)`
  position: absolute;
  right: 5px;
  top: 0;
  height: 19px;
  margin: 0;
  border-color: #41707d;
`;
const AddressRow = styled.div`
  height: 63px;
  flex: none;
  display: flex;
  align-items: flex-end;
  padding: 0 1px 7px 2px;
  color: #54666d;
`;
const BackFwd = styled.div`
  width: 70px;
  height: 24px;
  display: flex;
  align-items: center;
  gap: 4px;
`;
const Round = styled.span`
  width: 24px;
  height: 24px;
  border-radius: 12px;
  display: flex;
  align-items: center;
  justify-content: center;
  border: 1px solid ${(p) => (p.$on ? "#123a70" : "#5b8792")};
  background: ${(p) => (p.$on ? "linear-gradient(#b4c8e8 0, #3f6cc0 48%, #0e2c90 50%, #38a8e8)" : "linear-gradient(#c0d5da, #86abb5)")};
`;
const Arrow = ({ back, o = 1 }) => <svg width="14" height="12" viewBox="0 0 14 12" opacity={o}><path d={back ? "M7 1L2 6l5 5M2 6h11" : "M7 1l5 5-5 5M12 6H1"} fill="none" stroke="#fff" strokeWidth="2.600" /></svg>;
const Field = styled.div`
  width: ${(p) => p.$w}px;
  height: 22px;
  margin-left: ${(p) => p.$ml || 0}px;
  display: flex;
  align-items: center;
  padding-left: ${(p) => p.$pl}px;
  background: #d0e0e5;
  border: 1px solid #2c4b55;
  box-shadow: inset 0 0 0 1px #eef5f7, 0 0 0 1px rgba(190, 220, 228, 0.5);
`;
const Crumb = styled.span`
  width: ${(p) => p.$w}px;
  flex: none;
  display: flex;
  align-items: center;
`;
const Client = styled.div`
  flex: 1;
  min-height: 0;
  display: flex;
  flex-direction: column;
  border: 1px solid #1f3f48;
  background: #fcfcfc;
`;
const MenuBar = styled.div`
  height: 21px;
  flex: none;
  display: flex;
  align-items: center;
  padding-left: 10px;
  color: #111;
  background: linear-gradient(#fff, #eef0f9 7px, #d5dbef 8px, #e2e5f5);
  border-bottom: 1px solid #b8c0d4;
`;
const CommandBar = styled.div`
  height: 31px;
  flex: none;
  display: flex;
  align-items: center;
  padding-left: 18px;
  color: #1e395b;
  background: linear-gradient(#fbfdff, #eaf3fc 14px, #dce7f5 15px, #dbe6f4);
  border-bottom: 1px solid #a6b8d0;
`;
const Body = styled.div`
  flex: 1;
  min-height: 0;
  display: flex;
`;
const Tree = styled.div`
  width: 198px;
  flex: none;
  padding-top: 10px;
  overflow: hidden;
  color: #111;
`;
const TreeRow = styled.div`
  height: 21px;
  width: 196px;
  margin-left: 2px;
  padding-left: ${(p) => (p.$top ? 18 : 28)}px;
  display: flex;
  align-items: center;
  gap: 5px;
  overflow: hidden;
  border: 1px solid ${(p) => (p.$on ? "#d6d6d6" : "transparent")};
  border-right: 0;
  background: ${(p) => (p.$on ? "linear-gradient(#f8f8f8, #e4e4e4)" : "none")};
`;
const WinScroll = styled.div`
  width: ${(p) => p.$w || 15}px;
  flex: none;
  display: flex;
  flex-direction: column;
  align-items: center;
  padding: 7px 0;
  background: #f0f0f0;
`;
const WinThumb = styled.div`
  width: 15px;
  height: ${(p) => p.$h}px;
  margin: ${(p) => p.$mt}px 0 auto;
  display: flex;
  align-items: center;
  justify-content: center;
  border: 1px solid #979797;
  border-radius: 2px;
  background: linear-gradient(to right, #f4f4f4, #e6e6e6 48%, #cfcfd2 52%, #c4c4c8);
`;
const Grip = () => <svg width="7" height="9" viewBox="0 0 7 9"><path d="M0 1h7M0 4h7M0 7h7" stroke="#777" strokeWidth="1.400" /></svg>;
const Files = styled.div`
  flex: 1;
  min-width: 0;
  margin-left: 2px;
  border-left: 1px solid #dbe3ee;
  overflow: hidden;
`;
const fileCols = "351px 40px 160px 180px 136px 1fr";
const FileHead = styled.div`
  height: 25px;
  padding-top: 1px;
  display: grid;
  grid-template-columns: ${fileCols};
  color: #4c607a;
`;
const Col = styled.span`
  height: 21px;
  padding: 4px 0 0 ${(p) => (p.$first ? 18 : 6)}px;
  border-right: 1px solid #e2ebf5;
`;
const FileRow = styled.div`
  height: 21px;
  display: grid;
  grid-template-columns: ${fileCols};
  align-items: center;
  color: #6d6d6d;
`;
const FileName = styled.span`
  padding-left: 21px;
  display: flex;
  align-items: center;
  gap: 6px;
  color: #111;
  letter-spacing: -0.1px;
`;
const FileCell = styled.span`padding-left: 6px; letter-spacing: -0.15px;`;
const Mp3 = () => (
  <svg width="13" height="16" viewBox="0 0 13 16">
    <path d="M.5.5h8l4 4v11H.5z" fill="#e2f2fd" stroke="#5a8fc0" />
    <path d="M8.500.5v4h4z" fill="#4a9ad8" />
    <path d="M2.500 9.500h2.500v-3h3v3h2" fill="none" stroke="#111" strokeWidth="1.200" />
  </svg>
);
const Details = styled.div`
  height: 53px;
  flex: none;
  display: flex;
  align-items: flex-start;
  padding: 4px 0 0 22px;
  border-top: 1px solid #b9c9de;
  background: linear-gradient(#e3ebf6, #f0f3fa 8px);
`;
const Facts = styled.div`
  margin-left: 19px;
  padding-top: 1px;
  display: grid;
  grid-template-columns: 175px 105px 135px 42px 125px 49px 134px 31px 120px;
  grid-auto-rows: 18px;
  align-items: center;
  color: #1e395b;
`;
const Term = styled.span`
  color: #5a6779;
  justify-self: ${(p) => (p.$start ? "start" : "end")};
`;
const Value = styled.span`padding-left: 5px; display: flex;`;
const Title = styled.span`font-size: 12.200px; color: #111;`;

const artists = { 8: "Steve Grant", 9: "Dash Milli", 10: "Celldweller", 11: "ChristianRapz", 12: "Genocide", 13: "JeeJuh contest", 14: "DISL Automatic", 15: "K-Rino", 16: "Martha And The Vandellas", 19: "ytcracker", 20: "K-Rino", 21: "Celldweller", 22: "K-Rino", 23: "Scandroid", 24: "Prodigy", 25: "DISL Automatic", 26: "Wise Intelligent", 27: "Laura Branigan", 28: "Celldweller" };
const extra = { 16: ["8", "Nowhere To Run", "The Rock 'n' Roll Era: ..."], 27: ["18", "Self Control", "Only Dance: 1980-1984"] };
const files = [
  ...[13, 14, 15, 16, 17, 18, 19].map((n) => `Music ${n} Age of Empires II HD Edition Soundtrack.mp3`),
  "Music 20_ Age of Empires II {Soundtrack OST}.mp3", "Never Forget.mp3", "Never Scared.mp3", "New Elysium.mp3", "New Kingdom 777 Jesus World Order.mp3",
  "New World Order Rap [Ft. GodMode].mp3", "New World Police State.mp3", "No Fear.mp3", "No Redemption.mp3", "Nowhere To Run.mp3",
  "NWO Song (Sheeple drinking Kool Aid) 2013 - WAKE UP...", "Oath (Nightcore).mp3", "open your eyes (v1betta nolim multi).mp3", "Pantheon.mp3", "Precious One.mp3",
  "President K..mp3", "Pro-bots & Robophobes (Ft. Circle of Dust).mp3", "Real Power Is People ( ANTI-ILLUMINATI SONG).mp3", "Rich Old White Men (Prod. by Young Forever).mp3",
  "ROBBERS, BARONS & BANKERS.mp3", "Self Control.mp3", "So Long Sentiment.mp3",
];
const Disk = ({ kind }) => (
  <svg width="16" height="16" viewBox="0 0 16 16">
    {kind === "cd" && <circle cx="11" cy="5" r="4.500" fill="#d7dbd5" stroke="#8a8f8a" />}
    {kind === "win" && <path d="M3 2l4-1v4L3 6zM8 1l4-1v4L8 5zM3 6l4-1v3L3 9zM8 5l4-1v3L8 8z" fill="#ef7a28" />}
    {kind === "win" && <path d="M8 1l4-1v4L8 5z" fill="#8cc63f" />}
    <path d="M3 8h10l3 3H0z" fill={kind === "usb" ? "#8a8d90" : "#dcdee0"} />
    <path d="M0 10h16v5H0z" fill={kind === "usb" ? "#3f4245" : "#b5b9bd"} stroke="#7b8085" strokeWidth=".7" />
    <path d="M12 12h2v2h-2z" fill="#4db83a" />
  </svg>
);
const ComputerIcon = () => <svg width="16" height="16" viewBox="0 0 16 16"><path d="M1 4h3v11H1z" fill="#b5bfc6" /><path d="M5 1h10v9H5z" fill="#2b4fc4" stroke="#a9b5c2" /><path d="M7 12h7v2H7z" fill="#b5bfc6" /></svg>;
const tree = [
  [<FaStar key="i" size={15} color="#f8a92a" />, "Favorites", true],
  [<svg key="i" width="16" height="14" viewBox="0 0 16 14"><path d="M.5.5h15v13H.5z" fill="#3d7edb" stroke="#7c8894" /><path d="M1 11h14v2H1z" fill="#223a55" /></svg>, "Desktop"],
  [<FaChessPawn key="i" size={15} color="#6a4a2a" />, "~Games~"],
  [<svg key="i" width="16" height="16" viewBox="0 0 16 16"><path d="M1 2h14v13H1z" fill="#9aa0b5" /><circle cx="7" cy="9" r="4" fill="#d6dce0" /><path d="M10 3h4v5z" fill="#e8c52a" /></svg>, "~Apps~"],
  [<Folder key="i" />, "[C;]Public"], [<Folder key="i" />, "[N;]Downloads"],
  [<Folder key="i" person />, "[MTU]Google Drive"], [<Folder key="i" person />, "[TechEase_JDK]Google Drive"], [<Folder key="i" person />, "[TechEase_SVC]Google Drive"],
  null,
  [<svg key="i" width="16" height="16" viewBox="0 0 16 16"><path d="M0 1h15v12H0z" fill="#efdc8a" /><path d="M3 7h12v9h-3v-4H6v4H3z" fill="#62b5dd" /></svg>, "Libraries", true],
  [<FaMusic key="i" size={14} color="#2c8fd6" />, "Music"],
  [<svg key="i" width="16" height="14" viewBox="0 0 16 14"><path d="M.5.5h15v13H.5z" fill="#fff" stroke="#888" /><path d="M2 2h12v10H2z" fill="#9ad4ee" /><path d="M2 12V8l5 1 7-2v5z" fill="#2f7f5a" /></svg>, "Pictures"],
  [<svg key="i" width="16" height="16" viewBox="0 0 16 16"><path d="M1 0h14v16H1z" fill="#333" /><path d="M4 0h8v16H4z" fill="#62b5dd" /><path d="M4 6l8 4v2l-8-2z" fill="#c54b1f" /></svg>, "Videos"],
  null,
  [<ComputerIcon key="i" />, "Computer", true],
  [<Disk key="i" />, "RAPID (A:)"], [<Disk key="i" kind="win" />, "Local Disk (C:)"], [<Disk key="i" />, "Storage 1TB (G:)", false, true], [<Disk key="i" kind="cd" />, "CD Drive (H:)"],
  [<Disk key="i" kind="usb" />, "KINGSTON16G (I:)"], [<Disk key="i" kind="cd" />, "CD Drive (J:) Verizon Mobile"], [<Disk key="i" kind="usb" />, "Removable Disk (K:)"],
  [<Disk key="i" />, "Files & Programs (N:)"], [<Disk key="i" />, "500GB_2.5Spindle (R:)"], [<Disk key="i" />, "FileShare (T:)"], [<Disk key="i" />, "Storage (V:)"], [<Disk key="i" />, "Entertainment (W:)"],
  null,
  [<FaGlobe key="i" size={15} color="#3aa07a" />, "Network", true],
];
const StarRow = styled.span`display: flex; gap: 4px; padding-left: 1px;`;

function ExplorerWindow() {
  return (
    <Explorer>
      <WinControls>
        <Control $clear $w={29}><MinGlyph /></Control>
        <Control $clear $w={27}><MaxGlyph /></Control>
        <Control $clear $w={46}><XGlyph /></Control>
      </WinControls>
      <AddressRow>
        <BackFwd><Round $on><Arrow back /></Round><Round><Arrow o={0.6} /></Round><Tri c="#1d5ea8" /></BackFwd>
        <Field $w={854} $pl={4}>
          <Crumb $w={23}><Folder /></Crumb>
          <Crumb $w={12}><RightTri /></Crumb><Crumb $w={65}>Computer</Crumb>
          <Crumb $w={12}><RightTri /></Crumb><Crumb $w={96}>Storage 1TB (G:)</Crumb>
          <Crumb $w={12}><RightTri /></Crumb><Crumb $w={43}>Music</Crumb>
          <Crumb $w={12}><RightTri /></Crumb><span>!CurrentXIII</span>
          <Spring /><Tri c="#0a1a60" /><Gap $w={6} /><VRule $h={20} />
          <Slot $w={23}><svg width="14" height="13" viewBox="0 0 14 13"><path d="M4 1v7M1 5l3 4 3-4M10 12V5M7 8l3-4 3 4" fill="none" stroke="#2f78bd" strokeWidth="2" /></svg></Slot>
        </Field>
        <Field $w={190} $ml={7} $pl={8}>
          <i>Search !CurrentXIII</i><Spring />
          <svg width="13" height="13" viewBox="0 0 13 13"><circle cx="8" cy="5" r="3.800" fill="none" stroke="#2a6cc0" strokeWidth="1.800" /><path d="M5.500 8L1 12.500" stroke="#2a4a9a" strokeWidth="2.200" /></svg><Gap $w={5} />
        </Field>
      </AddressRow>
      <Client>
        <MenuBar><Crumb $w={34}>File</Crumb><Crumb $w={36}>Edit</Crumb><Crumb $w={41.500}>View</Crumb><Crumb $w={44.500}>Tools</Crumb>Help</MenuBar>
        <CommandBar>
          <Crumb $w={53}>Organize</Crumb><Crumb $w={38}><Tri c="#1e395b" /></Crumb>
          <Crumb $w={20}><Bolt s={16} paper /></Crumb><Crumb $w={92}>Play in Winamp</Crumb><Crumb $w={39}><Tri c="#1e395b" /></Crumb>
          <Crumb $w={67}>Play all</Crumb>New folder
          <Spring />
          <svg width="16" height="13" viewBox="0 0 16 13"><path d="M.5.5h4v3h-4zM.5 4.500h4v3h-4zM.5 8.500h4v3h-4z" fill="#fff" stroke="#7c8894" strokeWidth=".8" /><path d="M2 5.500h1.500v1.500H2z" fill="#d22" /><path d="M6 2h9M6 6h9M6 10h9" stroke="#556a80" strokeWidth="1.300" strokeDasharray="4 1" /></svg>
          <Gap $w={8} /><Tri c="#1e395b" /><Gap $w={22} />
          <svg width="16" height="14" viewBox="0 0 16 14"><path d="M.7.700h14.600v12.600H.7z" fill="#fff" stroke="#4a6a8a" strokeWidth="1.400" /><path d="M10 2h5v11h-5z" fill="#6fb8e0" /><path d="M1 3h9" stroke="#4a6a8a" /></svg>
          <Gap $w={20} /><Tile $bg="#2448b8" $r={8} $bd="#7a8288" $f={10}>?</Tile><Gap $w={15} />
        </CommandBar>
        <Body>
          <Tree>
            {tree.map((t, i) => (t ? <TreeRow key={i} $top={t[2]} $on={t[3]}><Slot $w={16}>{t[0]}</Slot>{t[1]}</TreeRow> : <TreeRow key={i} />))}
          </Tree>
          <WinScroll><Tri up w={7} h={4} c="#444" /><WinThumb $h={551} $mt={7}><Grip /></WinThumb><Tri w={7} h={4} c="#444" /></WinScroll>
          <Files>
            <FileHead><Col $first>Name</Col><Col>#</Col><Col>Title</Col><Col>Contributing artists</Col><Col>Album</Col><span /></FileHead>
            {files.map((f, i) => (
              <FileRow key={i}>
                <FileName><Mp3 />{f}</FileName>
                <FileCell>{extra[i] && extra[i][0]}</FileCell>
                <FileCell>{extra[i] && extra[i][1]}</FileCell>
                <FileCell>{artists[i]}</FileCell>
                <FileCell>{extra[i] && extra[i][2]}</FileCell>
              </FileRow>
            ))}
          </Files>
          <WinScroll $w={16}><Tri up w={7} h={4} c="#444" /><WinThumb $h={115} $mt={309}><Grip /></WinThumb><Tri w={7} h={4} c="#444" /></WinScroll>
        </Body>
        <Details>
          <svg width="36" height="44" viewBox="0 0 36 44">
            <path d="M.7.700H26l9 9v33.600H.7z" fill="#cbe9fa" stroke="#4a90c8" strokeWidth="1.400" /><path d="M26 .7v9h9z" fill="#4a9ad8" />
            <path d="M20 18l11 5-8 17-13-9z" fill="#fff" stroke="#222" /><path d="M28 17L12 31h7l-3 9 14-14h-6z" fill="#f08a1c" stroke="#4a2a05" />
          </svg>
          <Facts>
            <Title>Best Illuminati Rap Song.mp3</Title><Term>Contributing artists:</Term><Value>Specify contributing art...</Value><Term>Genre:</Term><Value>Other</Value><Term>Rating:</Term>
            <Value><StarRow>{[0, 1, 2, 3, 4].map((i) => <svg key={i} width="13" height="13" viewBox="0 0 13 13"><path d="M6.500 1l1.700 3.700 3.800.4-2.900 2.600.9 4-3.500-2.100L3 11.700l.9-4L1 5.100l3.800-.4z" fill="#fdfdfd" stroke="#b0b5bc" /></svg>)}</StarRow></Value>
            <Term>Size:</Term><Value>9.21 MB</Value>
            <Term $start>MPEG Layer 3 Audio File</Term><Term>Album:</Term><Value>Specify album</Value><Term>Length:</Term><Value>00:05:01</Value><Term>Year:</Term><Value>Specify the year this me...</Value>
          </Facts>
        </Details>
      </Client>
    </Explorer>
  );
}

/* ---------- Winamp ---------- */
const Amp = styled.div`
  position: absolute;
  left: 350px;
  top: 866px;
  width: 865px;
  height: 118px;
  overflow: hidden;
  display: flex;
  flex-direction: column;
  background: #25292c;
  border: 1px solid #000;
  border-bottom: 0;
  font-family: ${ARIAL};
  letter-spacing: 0;
`;
const AmpTitle = styled.div`
  height: 17px;
  flex: none;
  display: flex;
  align-items: center;
  padding: 0 4px;
  color: #d5d8dc;
  font-size: 9.5px;
  background: linear-gradient(#9a9da8, #696c78 45%, #383b49 52%, #3e4151 80%, #565967);
  border-bottom: 1px solid #000;
`;
const AmpBody = styled.div`
  flex: 1;
  min-height: 0;
  display: flex;
  padding: 4px 4px 0 5px;
  background: linear-gradient(#363b40, #1e2225);
`;
const AmpCol = styled.div`
  width: ${(p) => p.$w}px;
  margin-left: ${(p) => p.$ml || 0}px;
  flex: none;
  display: flex;
  flex-direction: column;
`;
const Lcd = styled.div`
  height: 30px;
  padding: 3px 4px 0 0;
  background: #07090b;
  color: #9cb9d2;
  text-align: right;
  font-size: 11px;
  line-height: 13px;
  border: 1px solid #4a5056;
  border-bottom: 0;
`;
const Rate = styled.div`
  font-size: 7.5px;
  line-height: 10px;
  padding-right: 46px;
  color: #6d7a84;
  b { color: #c0cfda; }
`;
const Under = styled.div`
  height: 23px;
  display: flex;
  align-items: center;
`;
const Scope = styled.div`
  width: 179px;
  height: 23px;
  background: #07090b;
  border: 1px solid #4a5056;
  border-top: 0;
  padding: 8px 0 0 14px;
`;
const Line = styled.div`
  width: ${(p) => p.$w}px;
  height: ${(p) => p.$h || 1}px;
  background: ${(p) => p.$c};
  flex: none;
`;
const Seek = styled.div`
  height: 5px;
  margin: 7px 2px 0 1px;
  background: #000;
  border: 1px solid #3c4246;
`;
const Keys = styled.div`
  display: flex;
  align-items: center;
  margin-top: ${(p) => p.$mt || 0}px;
`;
const Key = styled.span`
  width: ${(p) => p.$w}px;
  height: ${(p) => p.$h || 12}px;
  flex: none;
  display: flex;
  align-items: center;
  justify-content: center;
  border: 1px solid #1a1c1e;
  border-radius: 1px;
  background: ${(p) => (p.$on ? "linear-gradient(#dbe8ec, #93a8b0)" : p.$dark ? "linear-gradient(#8a8d90, #4a4d50)" : "linear-gradient(#e4e4e4, #8a8a8a)")};
  color: #1a1c1e;
  font: bold 8.500px/1 ${ARIAL};
`;
const Knob = styled.span`
  width: ${(p) => p.$w || 15}px;
  height: ${(p) => p.$h || 8}px;
  flex: none;
  border-radius: 2px;
  background: linear-gradient(#fff, #a5a8aa);
`;
const Eq = styled.div`
  width: 187px;
  height: 79px;
  background: #08090a;
  padding: 2px 2px 0;
  color: #8a8f92;
  font-size: 8px;
`;
const Bands = styled.div`
  height: 52px;
  margin-top: 2px;
  display: flex;
  background: linear-gradient(transparent 6px, #2e3134 6px 7px, transparent 7px 25px, #2e3134 25px 26px, transparent 26px 43px, #2e3134 43px 44px, transparent 44px);
`;
const Band = styled.div`
  width: ${(p) => p.$w}px;
  flex: none;
  display: flex;
  flex-direction: column;
  align-items: center;
  background: linear-gradient(to right, transparent calc(50% - 1px), #34373a calc(50% - 1px) calc(50% + 1px), transparent calc(50% + 1px));
`;
const Decibels = styled.div`
  width: 8px;
  margin: 0 0 0 -2px;
  flex: none;
  display: flex;
  flex-direction: column;
  justify-content: center;
  align-items: center;
  font-size: 7px;
  line-height: 18px;
  color: #6e7275;
`;
const BandKnob = styled.span`
  width: 7px;
  height: 15px;
  margin-top: ${(p) => p.$y}px;
  border-radius: 2px;
  background: linear-gradient(to right, #e8e8e8, #9a9da0 50%, #e0e0e0);
`;
const Labels = styled.div`
  display: flex;
  line-height: 15px;
  font-size: 7px;
`;
const Lab = styled.span`width: ${(p) => p.$w}px; flex: none; text-align: center;`;
const List = styled.div`
  height: 78px;
  width: 331px;
  background: #06080a;
  border: 1px solid #33383c;
  display: flex;
  justify-content: space-between;
  padding: 1px 3px 0 2px;
  color: #c9ced2;
  font-size: 12.2px;
  line-height: 18px;
`;
const ListWrap = styled.div`display: flex; gap: 2px;`;
const ListBar = styled.div`
  width: 12px;
  background: #1c2023;
`;
const Elapsed = styled.span`
  width: 60px;
  color: #c3d0d8;
  font-size: 9px;
  text-align: center;
`;
const PlayGlyph = ({ d }) => <svg width="10" height="9" viewBox="0 0 11 9"><path d={d} fill="#2a2d30" /></svg>;
const bands = [["70", 17, 13], ["180", 16, 26], ["320", 16, 22], ["600", 16, 17], ["1K", 16, 17], ["3K", 16, 17], ["6K", 16, 12], ["12K", 16, 12], ["14K", 16, 13], ["16K", 16, 11]];

function Winamp() {
  return (
    <Amp>
      <AmpTitle>
        <Tile $bg="#d8862a" $s={14} $h={12} $r={2} $f={10}>~</Tile><Gap $w={7} /><Crumb $w={54}><b>WINAMP</b></Crumb>
        <Crumb $w={24}>File</Crumb><Crumb $w={28.500}>Play</Crumb><Crumb $w={42}>Options</Crumb><Crumb $w={32}>View</Crumb>Help
        <Spring />
        <Key $w={17} $dark>_</Key><Gap $w={2} /><Key $w={17} $dark>□</Key><Gap $w={2} /><Key $w={17} $dark>T</Key><Gap $w={2} /><Tile $bg="#d8862a" $s={16} $h={12} $r={2} $f={9}>X</Tile>
      </AmpTitle>
      <AmpBody>
        <AmpCol $w={301}>
          <Lcd>Best Illuminati Rap Song --&nbsp; (5:01)<Rate><b>256</b> KBPS&nbsp;&nbsp; <b>48</b> KHZ</Rate></Lcd>
          <Under>
            <Scope><Line $w={73} $c="#7f98a3" /></Scope>
            <Gap $w={13} /><Key $w={22}><FaVolumeUp size={8} /></Key><Gap $w={10} /><Line $w={61} $h={3} $c="#6e8790" /><Knob />
          </Under>
          <Seek />
          <Keys $mt={5}>
            <Key $w={21} $h={18}><PlayGlyph d="M1 0h2v9H1zM10 0v9L4 4.500z" /></Key>
            <Key $w={21} $h={18}><PlayGlyph d="M2 0l8 4.500L2 9z" /></Key>
            <Key $w={21} $h={18}><PlayGlyph d="M2 0h3v9H2zM7 0h3v9H7z" /></Key>
            <Key $w={21} $h={18}><PlayGlyph d="M1 1h9v7H1z" /></Key>
            <Key $w={21} $h={18}><PlayGlyph d="M1 0l6 4.500L1 9zM8 0h2v9H8z" /></Key>
            <Gap $w={86} /><Key $w={22}><PlayGlyph d="M1 5l4.500-5L10 5zM1 7h9v1.500H1z" /></Key><Gap $w={8} />
            <Key $w={27} $on><svg width="12" height="8" viewBox="0 0 12 8"><path d="M4 1a3 3 0 0 0 0 6M8 1a3 3 0 0 1 0 6M5 3l2 2" fill="none" stroke="#3a6a7a" strokeWidth="1.300" /></svg></Key>
            <Key $w={26} $on><svg width="10" height="8" viewBox="0 0 10 8"><path d="M1 1h8v4H4M6 3L4 5l2 2" fill="none" stroke="#3a6a7a" strokeWidth="1.300" /></svg></Key>
            <Gap $w={7} /><Bolt s={18} />
          </Keys>
        </AmpCol>
        <AmpCol $w={187} $ml={10}>
          <Eq>
            <Keys>
              <Key $w={23} $h={11}><svg width="14" height="6" viewBox="0 0 14 6"><path d="M0 2h9M3 4.500h9M8 0l3 2M11 6l2-1.500" stroke="#222" fill="none" /></svg></Key><Gap $w={2} />
              <Key $dark $w={11} $h={11}>‹</Key><Lab $w={18}>0</Lab><Key $dark $w={11} $h={11}>›</Key>
              <Lab $w={30}>L</Lab><Line $w={28} $h={2} $c="#444" /><Knob $w={16} /><Line $w={29} $h={2} $c="#444" /><Lab $w={14}>R</Lab>
            </Keys>
            <Bands>
              <Band $w={14}><BandKnob $y={17} /></Band>
              <Decibels><span>+12</span><span>+0</span><span>-12</span></Decibels>
              <Gap $w={2} />
              {bands.map(([n, w, y]) => <Band key={n} $w={w}><BandKnob $y={y} /></Band>)}
            </Bands>
            <Labels><Lab $w={15}>PRE</Lab><Gap $w={7} />{bands.map(([n, w]) => <Lab key={n} $w={w}>{n}</Lab>)}</Labels>
          </Eq>
          <Keys>
            <Key $w={24} $on>ON</Key><Key $w={31}>AUTO</Key><Key $w={46}>PRESETS</Key><Gap $w={12} />
            <Key $w={24}><svg width="8" height="8" viewBox="0 0 8 8"><circle cx="5" cy="3" r="2" fill="none" stroke="#222" /><path d="M3.500 4.500L1 7.500" stroke="#222" /></svg></Key>
            <Key $w={24}><svg width="11" height="8" viewBox="0 0 11 8"><path d="M1 1h4v6H1zM4 4h6M8 2l2 2-2 2" fill="none" stroke="#222" /></svg></Key>
            <Key $w={25}><svg width="12" height="8" viewBox="0 0 12 8"><path d="M1 1.500h4v5H1zM7 2h4M7 4h4M7 6h4" fill="none" stroke="#222" /></svg></Key>
          </Keys>
        </AmpCol>
        <AmpCol $w={347} $ml={9}>
          <ListWrap><List><span>1. Best Illuminati Rap Song --</span><span>5:01</span></List><ListBar><Key $w={10} $h={19}>=</Key></ListBar></ListWrap>
          <Keys $mt={1}>
            <Key $w={24}>+</Key><Key $w={24}>–</Key><Key $w={24}>[ ]</Key><Key $w={24}>MISC</Key><Key $w={24}>≡</Key>
            <Spring /><Elapsed>0:00/5:01</Elapsed><Gap $w={78} /><Key $w={24}>◇</Key>
          </Keys>
        </AmpCol>
      </AmpBody>
    </Amp>
  );
}

/* ---------- App ---------- */
const Label = styled.span`align-self: center; color: #fff; letter-spacing: -0.15px;`;

export default function App() {
  return (
    <>
      <Global />
      <Board>
        <Screen $w={2560} $h={1440} $top={0}>
          <Desktop><Build>Windows 7<br />Build 7601</Build></Desktop>
          <Bar $pad={3}>
            <Task slot={162} w={151} iw={44} stack={2} icon={<Notepad />} text="many_google_e..." />
            <Task slot={162} w={158} iw={44} icon={<NotepadPP />} text="R:\YouTubeSidCo..." />
            <Task slot={162} w={151} iw={44} stack={2} icon={<Chrome />} text="www.ebay.com ..." />
          </Bar>
        </Screen>
        <Screen $w={1920} $h={1080} $top={162}>
          <BrowserWindow />
          <Bar $pad={8}>
            <Orb />
            <Slot $w={70}><Tile $bg="#fff" $s={30} $r={3}><AppGrid s={17} /></Tile></Slot>
            <Task slot={104} w={93} stack={2} active icon={<Chrome />} text="Googl..." />
            <Task slot={103.300} w={100} icon={<Sticky />} text="Sticky N..." />
            <Task slot={103.300} w={100} icon={<Badged><Tile $bg="#7289da" $s={26} $h={28} $r={4}><FaDiscord size={19} /></Tile><Badge $bg="#f04747" $x={15} $y={14} $r={7}>9+</Badge></Badged>} text="Discord" />
            <Task slot={103.300} w={100} icon={<Gem />} text="PeerBlo..." />
            <Task slot={103.300} w={100} icon={<Tile $bg="#241244" $bd="#a79adf" $s={30} $f={16}>◥</Tile>} text="Adobe ..." />
            <Task slot={103.300} w={100} icon={<Firefox />} text="Voice - ..." />
            <Task slot={103.300} w={100} icon={<VM />} text="Win Sm..." />
            <Task slot={103.300} w={100} icon={<Lens />} text="end - S..." />
            <Task slot={103.300} w={100} icon={<Monitor />} text="Windo..." />
            <Task slot={103.300} w={92} stack={2} icon={<Notepad />} text="Notep..." />
            <Task slot={113} w={100} icon={<Tile $bg="#2a0a3a" $bd="#e070ff" $s={30} $f={14} $c="#e890ff">Pr</Tile>} text="Adobe ..." />
            <Label>Desktop</Label>
            <Tray><Slot $w={23}>»</Slot></Tray>
            <Tray>{trayIcons.map((t, i) => <Slot key={i} $w={24}>{t}</Slot>)}<Gap $w={3} /><Clock>11:29 PM<br />6/13/2020</Clock></Tray>
            <Peek />
          </Bar>
        </Screen>
        <Screen $w={1280} $h={1024} $top={218}>
          <Desktop>
            <Build>Windows 7<br />Build 7601</Build>
            <ExplorerWindow />
            <Winamp />
          </Desktop>
          <Bar $pad={3}>
            <Task slot={141} w={138} iw={43} icon={<Bolt s={34} paper />} text="1. Best Illumin..." />
            <Task slot={141} w={138} iw={43} icon={<Drivebox />} text="FileShare (T:)" />
            <Task slot={141} w={138} iw={43} icon={<Notepad />} text="Untitled - Not..." />
            <Task slot={141} w={138} iw={43} icon={<Chrome />} text="Czech Republ..." />
            <Task slot={141} w={138} iw={43} icon={<Chrome />} text="The 144000 - ..." />
            <Task slot={141} w={138} iw={43} icon={<Chrome />} text="How long do..." />
            <Task slot={141} w={138} iw={43} icon={<Chrome />} text="2-Week Emer..." />
            <Task slot={141} w={138} iw={43} icon={<Folder w={34} h={34} />} text="!CurrentXIII" />
            <Task slot={141} w={138} iw={43} icon={<Drivebox />} text="RAPID (A:)" />
          </Bar>
        </Screen>
      </Board>
    </>
  );
}
